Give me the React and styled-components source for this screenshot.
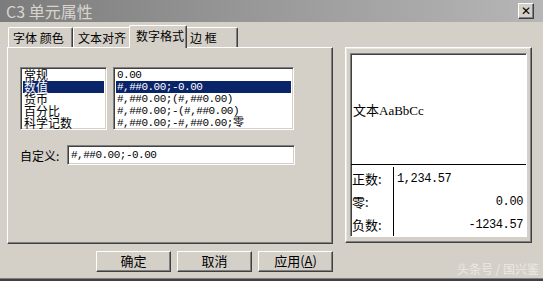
import styled, { createGlobalStyle } from 'styled-components'

const GlobalStyle = createGlobalStyle`
  html, body { margin: 0; padding: 0; background: #d4d0c8; }
  body { font-family: "Noto Sans CJK SC", "Liberation Sans", sans-serif; }
`

const cjk = `"Noto Sans CJK SC", "Liberation Sans", sans-serif`
const mono = `"Liberation Mono", "Noto Sans CJK SC", monospace`

const categories = ['常规', '数值', '货币', '百分比', '科学记数']
const formats = [
  '0.00',
  '#,##0.00;-0.00',
  '#,##0.00;(#,##0.00)',
  '#,##0.00;-(#,##0.00)',
  '#,##0.00;-#,##0.00;零',
]
const tabs = ['字体 颜色', '文本对齐', '数字格式', '边 框']
const tabWidths = [65, 58, 58, 53]

function App() {
  return (
    <Window>
      <GlobalStyle />
      <TitleBar>
        <Title>C3 单元属性</Title>
        <CloseButton>✕</CloseButton>
      </TitleBar>

      <Body>
        <LeftColumn>
          <TabRow>
            {tabs.map((t, i) => (
              <Tab key={t} $active={i === 2} $w={tabWidths[i]}>{t}</Tab>
            ))}
          </TabRow>
          <Panel>
            <Lists>
              <ListBox $w={87}>
                {categories.map((c, i) => (
                  <Item key={c} $selected={i === 1}>{c}</Item>
                ))}
              </ListBox>
              <ListBox $w={181}>
                {formats.map((f, i) => (
                  <Item key={f} $mono $selected={i === 1}>{f}</Item>
                ))}
              </ListBox>
            </Lists>
            <CustomRow>
              <Label>自定义:</Label>
              <Input>#,##0.00;-0.00</Input>
            </CustomRow>
          </Panel>
        </LeftColumn>

        <Preview>
          <PreviewInner>
            <Sample>文本AaBbCc</Sample>
            <Table>
              <Cell>正数:</Cell>
              <Value $align="left">1,234.57</Value>
              <Cell>零:</Cell>
              <Value>0.00</Value>
              <Cell>负数:</Cell>
              <Value>-1234.57</Value>
            </Table>
          </PreviewInner>
        </Preview>
      </Body>

      <Footer>
        <Button>确定</Button>
        <Button>取消</Button>
        <Button>应用(<u>A</u>)</Button>
        <Watermark>头条号 / 国兴鉴</Watermark>
      </Footer>
    </Window>
  )
}

const Window = styled.div`
  width: 543px;
  height: 281px;
  box-sizing: border-box;
  background: #d4d0c8;
  border-bottom: 2px solid #404040;
  box-shadow: inset 0 -1px 0 #808080;
  display: flex;
  flex-direction: column;
  overflow: hidden;
`

const TitleBar = styled.div`
  height: 22px;
  flex: none;
  display: flex;
  align-items: center;
  justify-content: space-between;
  padding: 0 9px 0 6px;
  background: linear-gradient(90deg, #7c7c7c 0%, #9a9a9a 50%, #b6b6b6 100%);
`

const Title = styled.div`
  font-family: ${cjk};
  font-size: 16px;
  line-height: 20px;
  color: #d8d5ce;
`

const CloseButton = styled.div`
  width: 16px;
  height: 16px;
  box-sizing: border-box;
  background: #d4d0c8;
  border: 1px solid;
  border-color: #ffffff #404040 #404040 #ffffff;
  box-shadow: inset -1px -1px 0 #808080;
  font-family: "DejaVu Sans", sans-serif;
  font-size: 12px;
  font-weight: bold;
  line-height: 14px;
  text-align: center;
  color: #000;
`

const Body = styled.div`
  display: flex;
  gap: 12px;
  padding: 3px 0 0 7px;
  height: 219px;
  flex: none;
`

const LeftColumn = styled.div`
  width: 326px;
  display: flex;
  flex-direction: column;
`

const TabRow = styled.div`
  display: flex;
  align-items: flex-end;
  height: 22px;
  padding-left: 1px;
  position: relative;
  z-index: 1;
`

const Tab = styled.div`
  width: ${p => p.$w}px;
  height: ${p => (p.$active ? 23 : 20)}px;
  margin: 0 ${p => (p.$active ? -2 : 0)}px ${p => (p.$active ? -1 : 0)}px;
  box-sizing: border-box;
  background: #d4d0c8;
  border-top: 1px solid #fff;
  border-left: 1px solid #fff;
  border-right: 1px solid #404040;
  border-radius: 2px 2px 0 0;
  box-shadow: inset -1px 0 0 #808080;
  font-family: ${cjk};
  font-size: 12px;
  line-height: 19px;
  padding-left: ${p => (p.$active ? 6 : 4)}px;
  color: #000;
  white-space: pre;
  position: relative;
  z-index: ${p => (p.$active ? 2 : 1)};
`

const Panel = styled.div`
  flex: 1;
  box-sizing: border-box;
  border-top: 1px solid #fff;
  border-left: 1px solid #fff;
  border-right: 1px solid #404040;
  border-bottom: 1px solid #404040;
  box-shadow: inset -1px -1px 0 #808080;
  padding: 19px 0 0 12px;
`

const Lists = styled.div`
  display: flex;
  gap: 6px;
`

const ListBox = styled.div`
  width: ${p => p.$w}px;
  height: 63px;
  box-sizing: border-box;
  background: #fff;
  border-top: 1px solid #808080;
  border-left: 1px solid #808080;
  border-right: 1px solid #fff;
  border-bottom: 1px solid #fff;
  box-shadow: inset 1px 1px 0 #404040, inset -1px -1px 0 #d4d0c8;
  padding: 1px 2px 0 2px;
  overflow: hidden;
`

const Item = styled.div`
  height: 12px;
  line-height: 12px;
  font-family: ${p => (p.$mono ? mono : cjk)};
  font-size: ${p => (p.$mono ? 11 : 12)}px;
  letter-spacing: ${p => (p.$mono ? '-0.5px' : '0')};
  padding-left: 1px;
  white-space: pre;
  color: ${p => (p.$selected ? '#fff' : '#000')};
  background: ${p => (p.$selected ? '#0a246a' : 'transparent')};
`

const CustomRow = styled.div`
  display: flex;
  align-items: center;
  margin-top: 15px;
`

const Label = styled.div`
  width: 47px;
  font-family: ${cjk};
  font-size: 12px;
  color: #000;
`

const Input = styled.div`
  width: 228px;
  height: 20px;
  box-sizing: border-box;
  background: #fff;
  border-top: 1px solid #808080;
  border-left: 1px solid #808080;
  border-right: 1px solid #fff;
  border-bottom: 1px solid #fff;
  box-shadow: inset 1px 1px 0 #404040, inset -1px -1px 0 #d4d0c8;
  padding-left: 3px;
  font-family: ${mono};
  font-size: 11px;
  letter-spacing: -0.5px;
  line-height: 18px;
  color: #000;
`

const Preview = styled.div`
  width: 187px;
  height: 196px;
  margin-top: 22px;
  box-sizing: border-box;
  border: 1px solid;
  border-color: #fff #404040 #404040 #fff;
  box-shadow: inset -1px -1px 0 #808080, inset 1px 1px 0 #e8e6e0;
  padding: 5px 4px 5px 4px;
`

const PreviewInner = styled.div`
  height: 100%;
  box-sizing: border-box;
  background: #fff;
  border: 1px solid;
  border-color: #808080 #fff #fff #808080;
  box-shadow: inset 1px 1px 0 #404040;
  display: flex;
  flex-direction: column;
`

const Sample = styled.div`
  height: 110px;
  flex: none;
  display: flex;
  align-items: center;
  padding-left: 2px;
  font-family: "Liberation Serif", "Noto Sans CJK SC", serif;
  font-size: 13px;
  color: #000;
  border-bottom: 1px solid #000;
`

const Table = styled.div`
  flex: 1;
  display: grid;
  grid-template-columns: 43px 1fr;
  grid-auto-rows: 1fr;
  padding-top: 2px;
`

const Cell = styled.div`
  border-right: 1px solid #000;
  font-family: ${cjk};
  font-size: 13px;
  display: flex;
  align-items: center;
  padding-left: 1px;
  color: #000;
`

const Value = styled.div`
  font-family: ${mono};
  font-size: 12px;
  letter-spacing: -0.4px;
  display: flex;
  align-items: center;
  justify-content: ${p => (p.$align === 'left' ? 'flex-start' : 'flex-end')};
  padding: 0 3px;
  color: #000;
`

const Footer = styled.div`
  display: flex;
  gap: 6px;
  padding: 7px 0 0 96px;
  position: relative;
  flex: 1;
`

const Button = styled.div`
  width: 75px;
  height: 21px;
  box-sizing: border-box;
  background: #d4d0c8;
  border: 1px solid;
  border-color: #fff #404040 #404040 #fff;
  box-shadow: inset -1px -1px 0 #808080;
  font-family: ${cjk};
  font-size: 13px;
  line-height: 18px;
  text-align: center;
  color: #000;

  u { text-decoration: underline; }
`

const Watermark = styled.div`
  position: absolute;
  right: 4px;
  bottom: 2px;
  font-family: ${cjk};
  font-size: 12px;
  color: #ebe9e4;
`

export default App
